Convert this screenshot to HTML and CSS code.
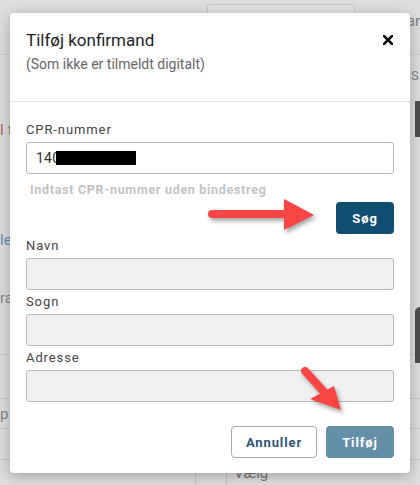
FILE: index.html
```html
<!DOCTYPE html>
<html lang="da">
<head>
<meta charset="utf-8">
<title>Tilføj konfirmand</title>
<link rel="stylesheet" href="styles.css">
</head>
<body>
<div class="page">
  <div class="topbar">
    <div class="search"></div>
    <span class="topfrag">ar</span>
  </div>
  <div class="content">
    <div class="leftcol">
      <div class="frag frag-lf"><span class="red">l</span> f</div>
      <div class="frag frag-le"><span class="blue">le</span></div>
      <div class="frag frag-ora">ra</div>
    </div>
    <div class="midcol"></div>
    <div class="rightcol">
      <div class="rfrag">S</div>
      <div class="rbar"></div>
      <div class="rblock"></div>
    </div>
  </div>
  <div class="trow trow1"></div>
  <div class="trow trow2"><div class="leftcut">p</div></div>
  <div class="trow trow3"></div>
  <div class="trow trow4">
    <div class="cell cell-a"></div>
    <div class="cell cell-b"></div>
    <div class="cell cell-c">Vælg</div>
  </div>
</div>

<div class="modal">
  <div class="modal-header">
    <div class="title-row">
      <h2 class="title">Tilføj konfirmand</h2>
      <button class="close" aria-label="Luk">
        <svg width="10" height="10" viewBox="0 0 10 10"><path d="M1 1 L9 9 M9 1 L1 9" stroke="#111" stroke-width="2.6" stroke-linecap="square"/></svg>
      </button>
    </div>
    <div class="subtitle">(Som ikke er tilmeldt digitalt)</div>
  </div>
  <div class="modal-body">
    <label class="label">CPR-nummer</label>
    <div class="input"><span class="val">140</span><span class="redact"></span></div>
    <div class="hint">Indtast CPR-nummer uden bindestreg</div>
    <div class="btn-row"><button class="btn btn-primary">Søg</button></div>
    <label class="label">Navn</label>
    <div class="input disabled"></div>
    <label class="label">Sogn</label>
    <div class="input disabled"></div>
    <label class="label">Adresse</label>
    <div class="input disabled"></div>
  </div>
  <div class="modal-footer">
    <button class="btn btn-outline">Annuller</button>
    <button class="btn btn-muted">Tilføj</button>
  </div>
</div>

<svg class="arrows" width="420" height="485" viewBox="0 0 420 485">
  <g class="arrow">
    <line x1="212" y1="214" x2="288" y2="214" stroke="#fa4545" stroke-width="8" stroke-linecap="round"/>
    <polygon points="284,199 314,215 284,230" fill="#fa4545"/>
  </g>
  <g class="arrow">
    <line x1="305" y1="371" x2="325" y2="393" stroke="#fa4545" stroke-width="8" stroke-linecap="round"/>
    <polygon points="310,399 334,386 341,410" fill="#fa4545"/>
  </g>
</svg>
</body>
</html>
```

FILE: styles.css
```css
* { box-sizing: border-box; }
html, body { margin: 0; padding: 0; }
body {
  width: 420px;
  height: 485px;
  overflow: hidden;
  position: relative;
  font-family: Roboto, "Liberation Sans", sans-serif;
  background: #dedede;
}

/* backdrop page (dimmed) */
.page { width: 420px; height: 485px; overflow: hidden; color: #848484; }
.topbar {
  height: 55px;
  border-bottom: 1px solid #cfcfcf;
  display: flex;
  align-items: flex-start;
}
.search {
  margin-left: 207px;
  margin-top: 4px;
  width: 149px;
  height: 30px;
  border: 1px solid #c6c6c6;
  border-radius: 3px;
  background: #e2e2e2;
}
.topfrag { margin-left: 52px; margin-top: 12px; font-size: 15px; color: #7f7f7f; }
.content {
  height: 299px;
  display: grid;
  grid-template-columns: 10px 1fr 9px;
}
.leftcol { display: flex; flex-direction: column; }
.frag {
  white-space: nowrap;
  font-size: 15px;
  line-height: 18px;
}
.frag-lf { margin-top: 66px; }
.frag-le { margin-top: 92px; }
.frag-ora { margin-top: 40px; }
.red { color: #a45e66; }
.blue { color: #5d8bb3; }
.rightcol { display: flex; flex-direction: column; }
.rfrag { margin-top: 12px; font-size: 13px; line-height: 18px; color: #7f7f7f; }
.rbar { margin-top: 16px; margin-left: 4px; height: 36px; background: #4e4e4e; }
.rblock { margin-top: 170px; margin-left: 4px; height: 56px; background: #4e4e4e; border-top-left-radius: 6px; }
.trow { border-top: 1px solid #cbcbcb; }
.trow1 { height: 44px; }
.trow2 { height: 30px; display: flex; align-items: center; }
.trow3 { height: 31px; }
.trow4 { height: 40px; display: flex; }
.leftcut {
  white-space: nowrap;
  font-size: 15px;
}
.cell-a { width: 195px; }
.cell-b { width: 31px; border-left: 1px solid #c6c6c6; }
.cell-c { border-left: 1px solid #c6c6c6; padding: 4px 0 0 7px; font-size: 15px; color: #7a7a7a; }

/* modal */
.modal {
  position: absolute;
  left: 10px;
  top: 13px;
  width: 400px;
  height: 460px;
  background: #fff;
  border-radius: 4px;
  box-shadow: 0 3px 14px rgba(0,0,0,0.28);
  display: flex;
  flex-direction: column;
}
.modal-header {
  padding: 17px 16px 28px 16px;
  border-bottom: 1px solid #e3e3e3;
}
.title-row { display: flex; justify-content: space-between; align-items: center; }
.title {
  margin: 0;
  font-size: 17px;
  line-height: 20px;
  font-weight: 400;
  color: #1e1e1e;
}
.close {
  border: 0;
  background: none;
  padding: 0;
  margin-right: 1px;
  width: 10px;
  height: 10px;
  display: flex;
}
.subtitle {
  margin-top: 5px;
  font-size: 14px;
  line-height: 18px;
  color: #666;
}
.modal-body {
  padding: 20px 16px 0 16px;
  display: flex;
  flex-direction: column;
}
.label {
  font-size: 13px;
  line-height: 16px;
  letter-spacing: 0.9px;
  color: #444;
  margin-bottom: 4px;
}
.input {
  height: 32px;
  border: 1px solid #b9b9b9;
  border-radius: 3px;
  background: #fff;
  display: flex;
  align-items: center;
  padding-left: 9px;
  margin-bottom: 4px;
}
.input.disabled { background: #f1f1f1; }
.val { font-size: 14px; color: #333; letter-spacing: 0.2px; }
.redact { display: inline-block; width: 80px; height: 14px; background: #000; margin-left: -4px; }
.hint {
  margin-top: 4px;
  padding-left: 4px;
  font-size: 12.5px;
  line-height: 16px;
  font-weight: 700;
  letter-spacing: 0.7px;
  color: #c2c2c2;
}
.btn-row { display: flex; justify-content: flex-end; margin-top: 4px; margin-bottom: 4px; }
.btn {
  height: 32px;
  border-radius: 4px;
  font-family: Roboto, "Liberation Sans", sans-serif;
  font-size: 13px;
  font-weight: 700;
  letter-spacing: 0.9px;
  padding: 0;
  display: flex;
  align-items: center;
  justify-content: center;
}
.btn-primary { width: 58px; background: #114e71; color: #fff; border: 0; }
.modal-footer {
  margin-top: auto;
  padding: 0 16px 15px 16px;
  display: flex;
  justify-content: flex-end;
  gap: 9px;
}
.btn-outline { width: 86px; background: #fff; border: 1px solid #a9a9a9; color: #2b5575; }
.btn-muted { width: 68px; background: #638fa9; color: #fff; border: 0; }

/* annotation arrows */
.arrows { position: absolute; left: 0; top: 0; pointer-events: none; }
.arrow { filter: drop-shadow(2px 3px 2px rgba(0,0,0,0.35)); }
```
